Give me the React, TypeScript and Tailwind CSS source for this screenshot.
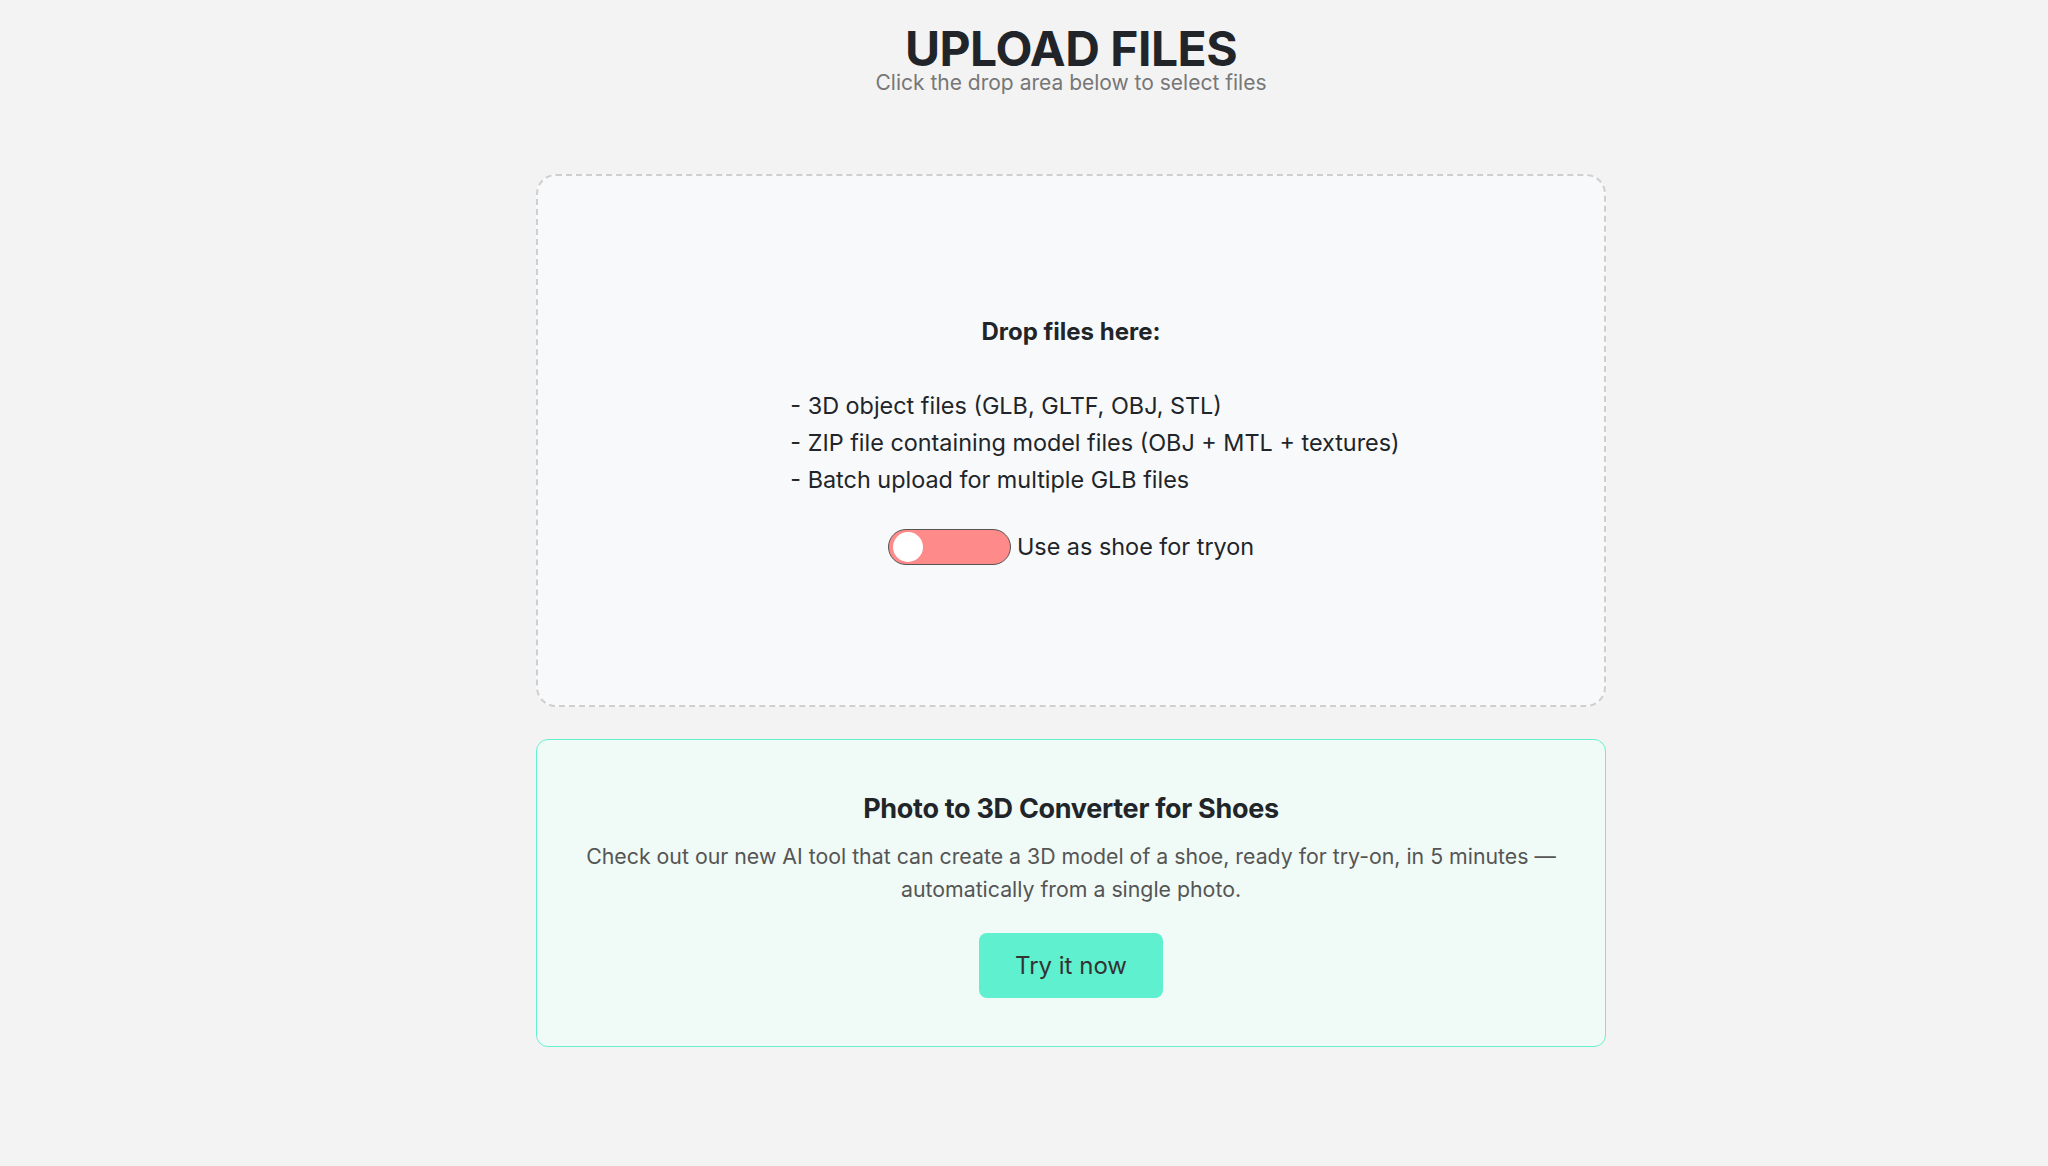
export default function App() {
  return (
    <div
      className="min-h-screen bg-[#f3f3f3] text-[#212529] pl-[94px]"
      style={{ fontFamily: "Inter, 'Noto Sans', sans-serif" }}
    >
      <div className="w-[1070px] mx-auto pt-[27px]">
        <div className="text-center">
          <h1 className="text-[48px] font-bold leading-[44px] tracking-[-0.5px] text-[#212529]">
            UPLOAD FILES
          </h1>
          <p className="text-[21px] leading-[22px] text-[#777777] mt-[1px]">
            Click the drop area below to select files
          </p>
        </div>

        <div className="mt-[80px] h-[533px] rounded-[20px] border-2 border-dashed border-[#cfcfcf] bg-[#f8f9fb] pt-[141px] text-center cursor-pointer">
          <h3 className="text-[24px] font-bold leading-[30px]">Drop files here:</h3>

          <ul className="inline-block text-left pl-[48px] mt-[40px] text-[23.4px] leading-[37px] text-[#212529]">
            <li>- 3D object files (GLB, GLTF, OBJ, STL)</li>
            <li>- ZIP file containing model files (OBJ + MTL + textures)</li>
            <li>- Batch upload for multiple GLB files</li>
          </ul>

          <div className="flex items-center justify-center gap-[6px] mt-[31px]">
            <div className="w-[123px] h-[36px] rounded-full border border-[#555555] bg-[#ff8a8a] flex items-center px-[4px]">
              <div className="w-[30px] h-[30px] rounded-full bg-white" />
            </div>
            <span className="text-[23.4px] leading-[36px]">Use as shoe for tryon</span>
          </div>
        </div>

        <div className="mt-[32px] h-[308px] rounded-[12px] border border-[#66f0d2] bg-[#f0faf6] pt-[52px] px-[36px] text-center">
          <h3 className="text-[27px] font-bold leading-[34px] tracking-[-0.3px]">
            Photo to 3D Converter for Shoes
          </h3>
          <p className="mt-[14px] text-[21.3px] leading-[33px] text-[#555555]">
            Check out our new AI tool that can create a 3D model of a shoe, ready for try-on, in 5 minutes —
            automatically from a single photo.
          </p>
          <button className="mt-[27px] w-[184px] h-[65px] rounded-[8px] bg-[#5ef0cf] text-[24px] text-[#333333]">
            Try it now
          </button>
        </div>
      </div>
    </div>
  );
}
